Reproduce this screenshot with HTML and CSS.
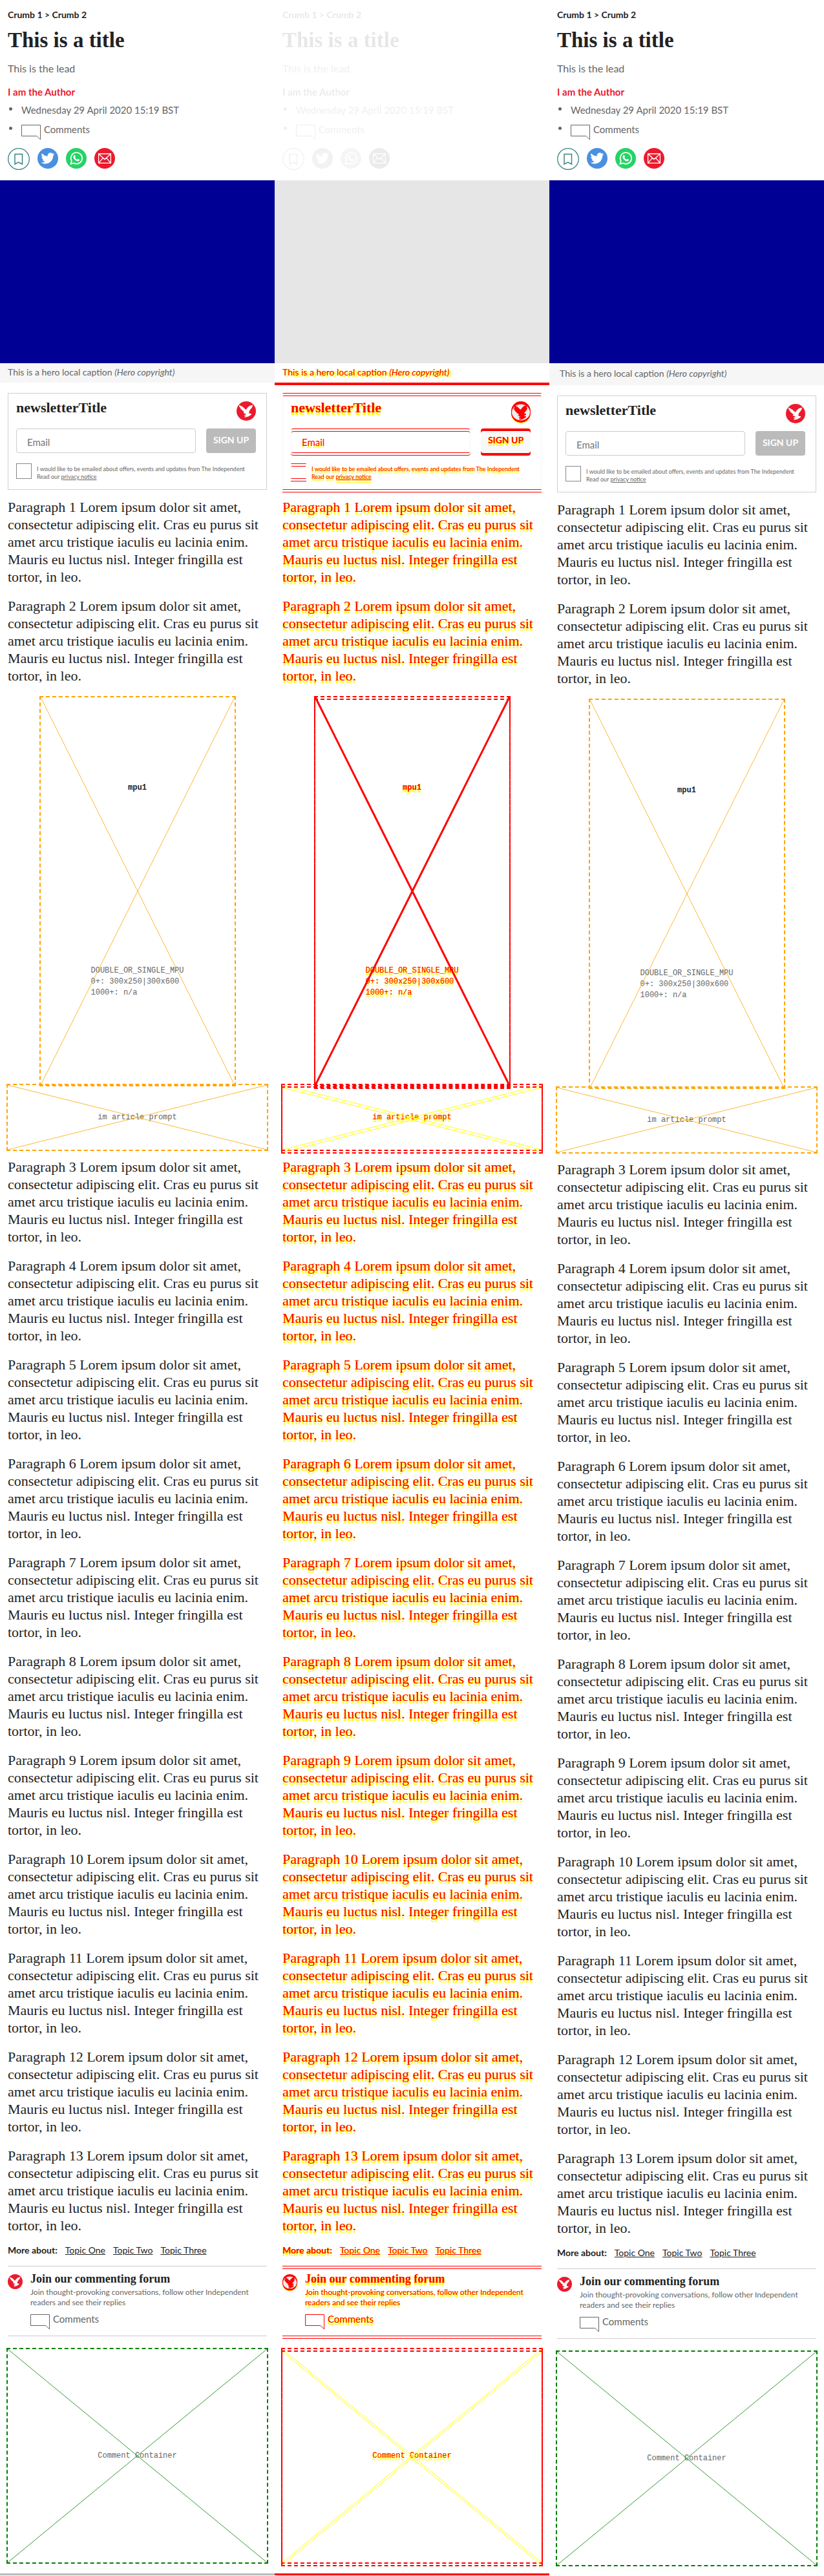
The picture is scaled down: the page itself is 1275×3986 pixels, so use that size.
FILE: index.html
```html
<!DOCTYPE html>
<html lang="en">
<head>
<meta charset="utf-8">
<title>This is a title</title>
<link rel="stylesheet" href="styles.css">
</head>
<body>
<svg class="sprite" aria-hidden="true">
  <symbol id="bubble" viewBox="0 0 30 24"><path d="M.5.5H29.500V23L24 17.500H.5Z" fill="none" stroke="currentColor"/></symbol>
  <symbol id="bookmark" viewBox="0 0 34 34"><circle cx="17" cy="17" r="16.300" fill="none" stroke="currentColor" stroke-width="1.300"/><path d="M11 9.500H22.500V25L16.700 22 11 25Z" fill="none" stroke="currentColor" stroke-width="1.500"/></symbol>
  <symbol id="twitter" viewBox="0 0 32 32"><circle cx="16" cy="16" r="16" fill="#4a90e2"/><path transform="translate(5.500 5.500) scale(.87)" fill="#fff" d="M23.950 4.570a10 10 0 0 1-2.820.770 4.960 4.960 0 0 0 2.160-2.720c-.950.550-2 .950-3.130 1.180a4.920 4.920 0 0 0-8.380 4.480C7.690 8.100 4.070 6.130 1.640 3.160a4.920 4.920 0 0 0 1.520 6.570 4.900 4.900 0 0 1-2.230-.610v.060a4.920 4.920 0 0 0 3.950 4.830 5 5 0 0 1-2.210.080 4.940 4.940 0 0 0 4.600 3.420A9.870 9.870 0 0 1 0 19.540a13.990 13.990 0 0 0 7.550 2.210c9.050 0 14-7.500 14-13.980 0-.210 0-.420-.020-.630a9.940 9.940 0 0 0 2.420-2.570Z"/></symbol>
  <symbol id="whatsapp" viewBox="0 0 32 32"><circle cx="16" cy="16" r="16" fill="#25d366"/><path d="M7.500 24.700 8.800 20A8.700 8.700 0 1 1 12.200 23.400Z" fill="none" stroke="#fff" stroke-width="1.800"/><path fill="#fff" d="M12.700 11.300c.5-.4 1.200-.3 1.400.2l.8 1.900c.1.500-.8 1.100-.7 1.500.7 1.400 1.700 2.300 3.100 2.900.5.100.9-1.100 1.500-.9l1.900.9c.5.300.3 1.500-.3 2-2.300 1.800-5.700-.2-7.400-2.300-1.600-1.900-2.300-4.600-.3-6.200Z"/></symbol>
  <symbol id="email" viewBox="0 0 32 32"><circle cx="16" cy="16" r="16" fill="#ec1a2e"/><path d="M6.600 9H25.400V23.400H6.600ZM6.600 9 16 17.500 25.400 9M6.600 23.400 13.300 15.300M25.400 23.400 18.700 15.300" fill="none" stroke="#fff" stroke-width="1.300"/></symbol>
  <symbol id="bird" viewBox="0 0 30 30"><path d="M3.500 6c3 .3 6.500 2.300 9.300 5.600l2 1.500c1.200-2.400 3-4.600 5.400-6l5-1.600c-.3 2.800-2 5.600-4.400 7.700l-1.600 3.500.6 2.100 3.300.5-.3 1.400-4.600 2.900-5.700 1.400.3-1.500 2.300-1-3.200-.2.500-1.300 2.600-.7-1.600-1.600-1.500.1-1.600-1.800 2-.5C7.500 13.500 5 10 3.500 6Z"/></symbol>
  <symbol id="eagle" viewBox="0 0 30 30"><circle cx="15" cy="15" r="15" fill="#ec1a2e"/><use href="#bird" width="30" height="30" fill="#fff"/></symbol>
  <symbol id="eagle-diff" viewBox="0 0 30 34"><circle cx="15" cy="19" r="15" fill="#ff0"/><circle cx="15" cy="18" r="15" fill="#f00"/><circle cx="15" cy="15" r="15" fill="#f00"/><ellipse cx="15" cy="17" rx="14" ry="12.500" fill="#eee"/><use href="#bird" width="30" height="30" fill="#f00"/><use href="#bird" y="4" width="30" height="30" fill="#f00"/></symbol>
</svg>
<main class="report">

<article class="panel">
  <header class="head">
    <nav class="crumbs">Crumb 1 &gt; Crumb 2</nav>
    <h1 class="title">This is a title</h1>
    <p class="lead">This is the lead</p>
    <p class="author">I am the Author</p>
    <ul class="meta"><li>Wednesday 29 April 2020 15:19 BST</li><li><span class="comments"><svg class="bubble"><use href="#bubble"/></svg>Comments</span></li></ul>
    <div class="share">
      <button class="save" aria-label="Save"><svg><use href="#bookmark"/></svg></button>
      <a href="#" aria-label="Twitter"><svg><use href="#twitter"/></svg></a>
      <a href="#" aria-label="WhatsApp"><svg><use href="#whatsapp"/></svg></a>
      <a href="#" aria-label="Email"><svg><use href="#email"/></svg></a>
    </div>
  </header>
  <div class="hero"></div>
  <p class="caption">This is a hero local caption <i>(Hero copyright)</i></p>
  <div class="content">
    <form class="newsletter">
      <div class="news-head"><h2>newsletterTitle</h2><svg class="logo"><use href="#eagle"/></svg></div>
      <div class="fields"><input type="email" placeholder="Email" aria-label="Email"><button type="button">SIGN UP</button></div>
      <div class="consent"><input type="checkbox" id="agree-a"><label for="agree-a">I would like to be emailed about offers, events and updates from The Independent<br>Read our <a href="#">privacy notice</a></label></div>
    </form>
    <p class="para">Paragraph 1 Lorem ipsum dolor sit amet, consectetur adipiscing elit. Cras eu purus sit amet arcu tristique iaculis eu lacinia enim. Mauris eu luctus nisl. Integer fringilla est tortor, in leo.</p>
    <p class="para">Paragraph 2 Lorem ipsum dolor sit amet, consectetur adipiscing elit. Cras eu purus sit amet arcu tristique iaculis eu lacinia enim. Mauris eu luctus nisl. Integer fringilla est tortor, in leo.</p>
    <div class="slot mpu"><svg class="cross"><line x2="100%" y2="100%"/><line x1="100%" x2="0" y2="100%"/></svg><b>mpu1</b><p>DOUBLE_OR_SINGLE_MPU<br>0+: 300x250|300x600<br>1000+: n/a</p></div>
    <div class="slot prompt"><svg class="cross"><line x2="100%" y2="100%"/><line x1="100%" x2="0" y2="100%"/></svg><p>im article prompt</p></div>
    <p class="para">Paragraph 3 Lorem ipsum dolor sit amet, consectetur adipiscing elit. Cras eu purus sit amet arcu tristique iaculis eu lacinia enim. Mauris eu luctus nisl. Integer fringilla est tortor, in leo.</p>
    <p class="para">Paragraph 4 Lorem ipsum dolor sit amet, consectetur adipiscing elit. Cras eu purus sit amet arcu tristique iaculis eu lacinia enim. Mauris eu luctus nisl. Integer fringilla est tortor, in leo.</p>
    <p class="para">Paragraph 5 Lorem ipsum dolor sit amet, consectetur adipiscing elit. Cras eu purus sit amet arcu tristique iaculis eu lacinia enim. Mauris eu luctus nisl. Integer fringilla est tortor, in leo.</p>
    <p class="para">Paragraph 6 Lorem ipsum dolor sit amet, consectetur adipiscing elit. Cras eu purus sit amet arcu tristique iaculis eu lacinia enim. Mauris eu luctus nisl. Integer fringilla est tortor, in leo.</p>
    <p class="para">Paragraph 7 Lorem ipsum dolor sit amet, consectetur adipiscing elit. Cras eu purus sit amet arcu tristique iaculis eu lacinia enim. Mauris eu luctus nisl. Integer fringilla est tortor, in leo.</p>
    <p class="para">Paragraph 8 Lorem ipsum dolor sit amet, consectetur adipiscing elit. Cras eu purus sit amet arcu tristique iaculis eu lacinia enim. Mauris eu luctus nisl. Integer fringilla est tortor, in leo.</p>
    <p class="para">Paragraph 9 Lorem ipsum dolor sit amet, consectetur adipiscing elit. Cras eu purus sit amet arcu tristique iaculis eu lacinia enim. Mauris eu luctus nisl. Integer fringilla est tortor, in leo.</p>
    <p class="para">Paragraph 10 Lorem ipsum dolor sit amet, consectetur adipiscing elit. Cras eu purus sit amet arcu tristique iaculis eu lacinia enim. Mauris eu luctus nisl. Integer fringilla est tortor, in leo.</p>
    <p class="para">Paragraph 11 Lorem ipsum dolor sit amet, consectetur adipiscing elit. Cras eu purus sit amet arcu tristique iaculis eu lacinia enim. Mauris eu luctus nisl. Integer fringilla est tortor, in leo.</p>
    <p class="para">Paragraph 12 Lorem ipsum dolor sit amet, consectetur adipiscing elit. Cras eu purus sit amet arcu tristique iaculis eu lacinia enim. Mauris eu luctus nisl. Integer fringilla est tortor, in leo.</p>
    <p class="para">Paragraph 13 Lorem ipsum dolor sit amet, consectetur adipiscing elit. Cras eu purus sit amet arcu tristique iaculis eu lacinia enim. Mauris eu luctus nisl. Integer fringilla est tortor, in leo.</p>
    <nav class="topics"><b>More about:</b><a href="#">Topic One</a><a href="#">Topic Two</a><a href="#">Topic Three</a></nav>
    <section class="forum"><svg class="logo"><use href="#eagle"/></svg><div><h3>Join our commenting forum</h3><p>Join thought-provoking conversations, follow other Independent readers and see their replies</p><span class="comments"><svg class="bubble"><use href="#bubble"/></svg>Comments</span></div></section>
    <div class="slot container"><svg class="cross"><line x2="100%" y2="100%"/><line x1="100%" x2="0" y2="100%"/></svg><p>Comment Container</p></div>
  </div>
  <div class="tail"></div>
</article>

<article class="panel diff">
  <header class="head">
    <nav class="crumbs">Crumb 1 &gt; Crumb 2</nav>
    <h1 class="title">This is a title</h1>
    <p class="lead">This is the lead</p>
    <p class="author">I am the Author</p>
    <ul class="meta"><li>Wednesday 29 April 2020 15:19 BST</li><li><span class="comments"><svg class="bubble"><use href="#bubble"/></svg>Comments</span></li></ul>
    <div class="share">
      <button class="save" aria-label="Save"><svg><use href="#bookmark"/></svg></button>
      <a href="#" aria-label="Twitter"><svg><use href="#twitter"/></svg></a>
      <a href="#" aria-label="WhatsApp"><svg><use href="#whatsapp"/></svg></a>
      <a href="#" aria-label="Email"><svg><use href="#email"/></svg></a>
    </div>
  </header>
  <div class="hero"></div>
  <p class="caption">This is a hero local caption <i>(Hero copyright)</i></p>
  <div class="content">
    <form class="newsletter">
      <div class="news-head"><h2>newsletterTitle</h2><svg class="logo"><use href="#eagle-diff"/></svg></div>
      <div class="fields"><input type="email" placeholder="Email" aria-label="Email"><button type="button">SIGN UP</button></div>
      <div class="consent"><input type="checkbox" id="agree-b"><label for="agree-b">I would like to be emailed about offers, events and updates from The Independent<br>Read our <a href="#">privacy notice</a></label></div>
    </form>
    <p class="para">Paragraph 1 Lorem ipsum dolor sit amet, consectetur adipiscing elit. Cras eu purus sit amet arcu tristique iaculis eu lacinia enim. Mauris eu luctus nisl. Integer fringilla est tortor, in leo.</p>
    <p class="para">Paragraph 2 Lorem ipsum dolor sit amet, consectetur adipiscing elit. Cras eu purus sit amet arcu tristique iaculis eu lacinia enim. Mauris eu luctus nisl. Integer fringilla est tortor, in leo.</p>
    <div class="slot mpu"><svg class="cross"><line x2="100%" y2="100%"/><line x1="100%" x2="0" y2="100%"/></svg><b>mpu1</b><p>DOUBLE_OR_SINGLE_MPU<br>0+: 300x250|300x600<br>1000+: n/a</p></div>
    <div class="slot prompt"><svg class="cross"><line x2="100%" y2="100%"/><line x1="100%" x2="0" y2="100%"/></svg><p>im article prompt</p></div>
    <p class="para">Paragraph 3 Lorem ipsum dolor sit amet, consectetur adipiscing elit. Cras eu purus sit amet arcu tristique iaculis eu lacinia enim. Mauris eu luctus nisl. Integer fringilla est tortor, in leo.</p>
    <p class="para">Paragraph 4 Lorem ipsum dolor sit amet, consectetur adipiscing elit. Cras eu purus sit amet arcu tristique iaculis eu lacinia enim. Mauris eu luctus nisl. Integer fringilla est tortor, in leo.</p>
    <p class="para">Paragraph 5 Lorem ipsum dolor sit amet, consectetur adipiscing elit. Cras eu purus sit amet arcu tristique iaculis eu lacinia enim. Mauris eu luctus nisl. Integer fringilla est tortor, in leo.</p>
    <p class="para">Paragraph 6 Lorem ipsum dolor sit amet, consectetur adipiscing elit. Cras eu purus sit amet arcu tristique iaculis eu lacinia enim. Mauris eu luctus nisl. Integer fringilla est tortor, in leo.</p>
    <p class="para">Paragraph 7 Lorem ipsum dolor sit amet, consectetur adipiscing elit. Cras eu purus sit amet arcu tristique iaculis eu lacinia enim. Mauris eu luctus nisl. Integer fringilla est tortor, in leo.</p>
    <p class="para">Paragraph 8 Lorem ipsum dolor sit amet, consectetur adipiscing elit. Cras eu purus sit amet arcu tristique iaculis eu lacinia enim. Mauris eu luctus nisl. Integer fringilla est tortor, in leo.</p>
    <p class="para">Paragraph 9 Lorem ipsum dolor sit amet, consectetur adipiscing elit. Cras eu purus sit amet arcu tristique iaculis eu lacinia enim. Mauris eu luctus nisl. Integer fringilla est tortor, in leo.</p>
    <p class="para">Paragraph 10 Lorem ipsum dolor sit amet, consectetur adipiscing elit. Cras eu purus sit amet arcu tristique iaculis eu lacinia enim. Mauris eu luctus nisl. Integer fringilla est tortor, in leo.</p>
    <p class="para">Paragraph 11 Lorem ipsum dolor sit amet, consectetur adipiscing elit. Cras eu purus sit amet arcu tristique iaculis eu lacinia enim. Mauris eu luctus nisl. Integer fringilla est tortor, in leo.</p>
    <p class="para">Paragraph 12 Lorem ipsum dolor sit amet, consectetur adipiscing elit. Cras eu purus sit amet arcu tristique iaculis eu lacinia enim. Mauris eu luctus nisl. Integer fringilla est tortor, in leo.</p>
    <p class="para">Paragraph 13 Lorem ipsum dolor sit amet, consectetur adipiscing elit. Cras eu purus sit amet arcu tristique iaculis eu lacinia enim. Mauris eu luctus nisl. Integer fringilla est tortor, in leo.</p>
    <nav class="topics"><b>More about:</b><a href="#">Topic One</a><a href="#">Topic Two</a><a href="#">Topic Three</a></nav>
    <section class="forum"><svg class="logo"><use href="#eagle-diff"/></svg><div><h3>Join our commenting forum</h3><p>Join thought-provoking conversations, follow other Independent readers and see their replies</p><span class="comments"><svg class="bubble"><use href="#bubble"/></svg>Comments</span></div></section>
    <div class="slot container"><svg class="cross"><line x2="100%" y2="100%"/><line x1="100%" x2="0" y2="100%"/></svg><p>Comment Container</p></div>
  </div>
  <div class="tail"></div>
</article>

<article class="panel after">
  <header class="head">
    <nav class="crumbs">Crumb 1 &gt; Crumb 2</nav>
    <h1 class="title">This is a title</h1>
    <p class="lead">This is the lead</p>
    <p class="author">I am the Author</p>
    <ul class="meta"><li>Wednesday 29 April 2020 15:19 BST</li><li><span class="comments"><svg class="bubble"><use href="#bubble"/></svg>Comments</span></li></ul>
    <div class="share">
      <button class="save" aria-label="Save"><svg><use href="#bookmark"/></svg></button>
      <a href="#" aria-label="Twitter"><svg><use href="#twitter"/></svg></a>
      <a href="#" aria-label="WhatsApp"><svg><use href="#whatsapp"/></svg></a>
      <a href="#" aria-label="Email"><svg><use href="#email"/></svg></a>
    </div>
  </header>
  <div class="hero"></div>
  <p class="caption">This is a hero local caption <i>(Hero copyright)</i></p>
  <div class="content">
    <form class="newsletter">
      <div class="news-head"><h2>newsletterTitle</h2><svg class="logo"><use href="#eagle"/></svg></div>
      <div class="fields"><input type="email" placeholder="Email" aria-label="Email"><button type="button">SIGN UP</button></div>
      <div class="consent"><input type="checkbox" id="agree-c"><label for="agree-c">I would like to be emailed about offers, events and updates from The Independent<br>Read our <a href="#">privacy notice</a></label></div>
    </form>
    <p class="para">Paragraph 1 Lorem ipsum dolor sit amet, consectetur adipiscing elit. Cras eu purus sit amet arcu tristique iaculis eu lacinia enim. Mauris eu luctus nisl. Integer fringilla est tortor, in leo.</p>
    <p class="para">Paragraph 2 Lorem ipsum dolor sit amet, consectetur adipiscing elit. Cras eu purus sit amet arcu tristique iaculis eu lacinia enim. Mauris eu luctus nisl. Integer fringilla est tortor, in leo.</p>
    <div class="slot mpu"><svg class="cross"><line x2="100%" y2="100%"/><line x1="100%" x2="0" y2="100%"/></svg><b>mpu1</b><p>DOUBLE_OR_SINGLE_MPU<br>0+: 300x250|300x600<br>1000+: n/a</p></div>
    <div class="slot prompt"><svg class="cross"><line x2="100%" y2="100%"/><line x1="100%" x2="0" y2="100%"/></svg><p>im article prompt</p></div>
    <p class="para">Paragraph 3 Lorem ipsum dolor sit amet, consectetur adipiscing elit. Cras eu purus sit amet arcu tristique iaculis eu lacinia enim. Mauris eu luctus nisl. Integer fringilla est tortor, in leo.</p>
    <p class="para">Paragraph 4 Lorem ipsum dolor sit amet, consectetur adipiscing elit. Cras eu purus sit amet arcu tristique iaculis eu lacinia enim. Mauris eu luctus nisl. Integer fringilla est tortor, in leo.</p>
    <p class="para">Paragraph 5 Lorem ipsum dolor sit amet, consectetur adipiscing elit. Cras eu purus sit amet arcu tristique iaculis eu lacinia enim. Mauris eu luctus nisl. Integer fringilla est tortor, in leo.</p>
    <p class="para">Paragraph 6 Lorem ipsum dolor sit amet, consectetur adipiscing elit. Cras eu purus sit amet arcu tristique iaculis eu lacinia enim. Mauris eu luctus nisl. Integer fringilla est tortor, in leo.</p>
    <p class="para">Paragraph 7 Lorem ipsum dolor sit amet, consectetur adipiscing elit. Cras eu purus sit amet arcu tristique iaculis eu lacinia enim. Mauris eu luctus nisl. Integer fringilla est tortor, in leo.</p>
    <p class="para">Paragraph 8 Lorem ipsum dolor sit amet, consectetur adipiscing elit. Cras eu purus sit amet arcu tristique iaculis eu lacinia enim. Mauris eu luctus nisl. Integer fringilla est tortor, in leo.</p>
    <p class="para">Paragraph 9 Lorem ipsum dolor sit amet, consectetur adipiscing elit. Cras eu purus sit amet arcu tristique iaculis eu lacinia enim. Mauris eu luctus nisl. Integer fringilla est tortor, in leo.</p>
    <p class="para">Paragraph 10 Lorem ipsum dolor sit amet, consectetur adipiscing elit. Cras eu purus sit amet arcu tristique iaculis eu lacinia enim. Mauris eu luctus nisl. Integer fringilla est tortor, in leo.</p>
    <p class="para">Paragraph 11 Lorem ipsum dolor sit amet, consectetur adipiscing elit. Cras eu purus sit amet arcu tristique iaculis eu lacinia enim. Mauris eu luctus nisl. Integer fringilla est tortor, in leo.</p>
    <p class="para">Paragraph 12 Lorem ipsum dolor sit amet, consectetur adipiscing elit. Cras eu purus sit amet arcu tristique iaculis eu lacinia enim. Mauris eu luctus nisl. Integer fringilla est tortor, in leo.</p>
    <p class="para">Paragraph 13 Lorem ipsum dolor sit amet, consectetur adipiscing elit. Cras eu purus sit amet arcu tristique iaculis eu lacinia enim. Mauris eu luctus nisl. Integer fringilla est tortor, in leo.</p>
    <nav class="topics"><b>More about:</b><a href="#">Topic One</a><a href="#">Topic Two</a><a href="#">Topic Three</a></nav>
    <section class="forum"><svg class="logo"><use href="#eagle"/></svg><div><h3>Join our commenting forum</h3><p>Join thought-provoking conversations, follow other Independent readers and see their replies</p><span class="comments"><svg class="bubble"><use href="#bubble"/></svg>Comments</span></div></section>
    <div class="slot container"><svg class="cross"><line x2="100%" y2="100%"/><line x1="100%" x2="0" y2="100%"/></svg><p>Comment Container</p></div>
  </div>
</article>

</main>
</body>
</html>
```
FILE: styles.css
```css
* { box-sizing: border-box; }
body, h1, h2, h3, p, ul { margin: 0; padding: 0; }
body { background: #fff; color: #666; font: 15px/24px Lato, sans-serif; }
svg { display: block; flex: none; }
a { color: inherit; }
.sprite { position: absolute; width: 0; height: 0; }

.report { display: grid; grid-template-columns: repeat(3, minmax(0, 1fr)); align-items: start; }

/* Article header */
.head { padding: 13px 12px 16px; }
.crumbs { color: #222; font-size: 14px; font-weight: 700; line-height: 20px; margin-bottom: 9px; }
.title { color: #222; font: 700 33px/40px "Liberation Serif", serif; margin-bottom: 12px; }
.lead { font-size: 16px; margin-bottom: 12px; }
.author { color: #ec1a2e; font-weight: 700; margin-bottom: 4px; }
.meta { display: grid; gap: 6px; list-style: none; margin-bottom: 17px; }
.meta li { display: flex; height: 24px; }
.meta li::before { content: ""; width: 5px; height: 5px; border-radius: 50%; background: currentColor; margin: 8px 14px 0 2px; }
.comments { display: flex; gap: 5px; }
.bubble { width: 30px; height: 24px; margin-top: 5px; margin-bottom: -5px; }
.share { display: flex; gap: 12px; }
.share svg { width: 32px; height: 32px; }
.save { display: block; border: 0; padding: 0; background: none; color: #3a8583; }
.share .save svg { width: 34px; height: 34px; }
.hero { height: 283px; background: #000095; }
.caption { padding: 4px 12px 6px; background: #f6f6f6; font-size: 14px; line-height: 20px; }
.after .caption { padding: 6px 16px 8px; }

.content { padding: 16px 12px 15px; }

/* Newsletter sign-up */
.newsletter { border: 1px solid #d0d0d0; padding: 8px 16px 16px 12px; margin-bottom: 13px; }
.news-head { display: flex; justify-content: space-between; margin-bottom: 12px; }
.news-head h2 { color: #222; font: 700 22px/28px "Liberation Serif", serif; }
.news-head .logo { width: 30px; height: 30px; margin-top: 4px; }
.fields { display: grid; grid-template-columns: 1fr 77px; gap: 16px; margin-bottom: 16px; }
.fields input { width: 100%; height: 38px; border: 1px solid #ccc; border-radius: 4px; padding: 4px 16px 0; background: #fff; font: 15px Lato, sans-serif; }
.fields input::placeholder { color: #757575; }
.fields button { border: 0; border-radius: 4px; padding: 0 0 4px; background: #bbb; color: #fff; font: 700 14px Lato, sans-serif; }
.consent { display: flex; gap: 8px; height: 24px; }
.consent input { appearance: none; flex: none; width: 24px; height: 24px; margin: 0; border: 1px solid #888; }
.consent label { font-size: 9px; line-height: 12px; padding-top: 3px; white-space: nowrap; }

.para { color: #222; font: 22px/27px "Liberation Serif", serif; margin-bottom: 18px; }

/* Placeholder slots */
.slot { position: relative; border: 2px dashed orange; margin: 0 -2px; font: 12px/17px "Liberation Mono", monospace; }
.cross { position: absolute; inset: 0; width: 100%; height: 100%; stroke: orange; stroke-width: 1px; opacity: .8; overflow: visible; }
.mpu { display: flex; flex-direction: column; align-items: center; width: 304px; height: 604px; margin: 0 auto; padding-top: 132px; }
.mpu b { color: #222; margin-bottom: 266px; }
.prompt, .container { display: grid; place-items: center; }
.prompt { height: 104px; margin-top: -4px; margin-bottom: 11px; }
.container { height: 334px; border-color: green; }
.container .cross { stroke: green; }

/* Footer of the article */
.topics { display: flex; gap: 12px; color: #222; font-size: 14px; line-height: 20px; margin: -3px 0 14px; }
.forum { display: flex; gap: 12px; border: solid #ccc; border-width: 1px 0; padding-top: 8px; padding-bottom: 14px; margin-bottom: 18px; }
.forum .logo { width: 23px; height: 23px; margin-top: 4px; }
.forum h3 { color: #222; font: 700 18px/22px "Liberation Serif", serif; margin-bottom: 2px; }
.forum p { font-size: 12px; line-height: 16px; margin-bottom: 5px; }
.tail { height: 3px; background: #bbb; }

/* Comparison column */
.diff .head { filter: grayscale(1); opacity: .1; }
.diff .hero { background: #e6e6e6; }
.diff .caption { background: #fff; border-bottom: 4px solid #f00; margin-bottom: -4px; }
.diff .caption, .diff h2, .diff h3, .diff label, .diff .para, .diff .topics, .diff .forum, .diff .slot, .diff .slot b, .diff .fields button { color: #f00; text-shadow: 0 4px #ff0, 1px 0 #ff0; }
.diff .caption { text-shadow: 4px 2px #ff0, 1px 0 #ff0; }
.diff .fields input::placeholder { color: #f00; text-shadow: 0 4px #ff0; }
.diff .newsletter { border-color: #f00 #f6f6f6; box-shadow: 0 3px #fff, 0 4px #f00, inset 0 3px #fff, inset 0 4px #f00; }
.diff .news-head .logo { height: 34px; margin-bottom: -4px; }
.diff .fields input { border-color: #f00 #f6f6f6; box-shadow: 0 3px #fff, 0 4px #f00, inset 0 3px #fff, inset 0 4px #f00; }
.diff .fields button { background: #f8f8f8; box-shadow: 0 4px #f00, inset 0 4px #f00; }
.diff .consent input { border-color: #f00 #f6f6f6; box-shadow: 0 3px #fff, 0 4px #f00, inset 0 3px #fff, inset 0 4px #f00; }
.diff .slot { border-color: #f00; }
.diff .slot::after { content: ""; position: absolute; inset: 2px -2px -6px; border: 2px dashed #f00; }
.diff .cross { stroke: #ff0; opacity: 1; filter: drop-shadow(0 4px #ff0); }
.diff .mpu .cross { stroke: #f00; stroke-width: 3px; filter: none; }
.diff .forum { border-color: #f00; box-shadow: 0 3px #fff, 0 4px #f00, inset 0 3px #fff, inset 0 4px #f00; }
.diff .forum .logo { height: 26px; }
.diff .tail { background: #f00; }
```
